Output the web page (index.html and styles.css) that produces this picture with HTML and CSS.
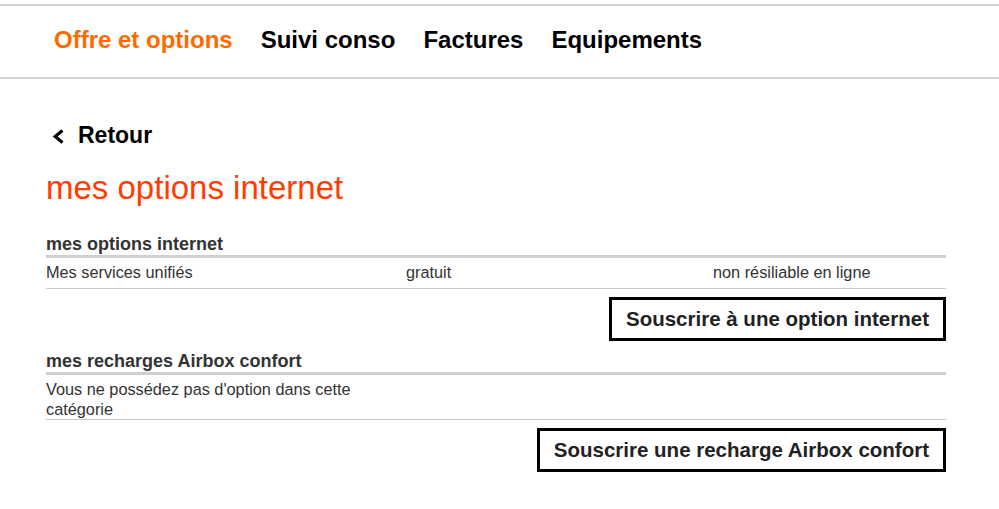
FILE: index.html
```html
<!DOCTYPE html>
<html lang="fr">
<head>
<meta charset="utf-8">
<title>mes options internet</title>
<link rel="stylesheet" href="styles.css">
</head>
<body>
<header class="topbar">
  <nav class="nav">
    <a class="nav__item nav__item--active" href="#">Offre et options</a>
    <a class="nav__item" href="#">Suivi conso</a>
    <a class="nav__item" href="#">Factures</a>
    <a class="nav__item" href="#">Equipements</a>
  </nav>
</header>
<main class="content">
  <a class="back" href="#">
    <svg class="back__icon" width="13" height="15" viewBox="0 0 13 15" aria-hidden="true">
      <polyline points="10.5,1.5 3.2,7.5 10.5,13.5" fill="none" stroke="#000" stroke-width="3.2"/>
    </svg>
    <span>Retour</span>
  </a>
  <h1 class="title">mes options internet</h1>

  <section class="section">
    <h2 class="section__head">mes options internet</h2>
    <div class="row row--tall">
      <div class="cell">Mes services unifiés</div>
      <div class="cell">gratuit</div>
      <div class="cell">non résiliable en ligne</div>
    </div>
    <div class="actions"><button class="btn">Souscrire à une option internet</button></div>
  </section>

  <section class="section">
    <h2 class="section__head">mes recharges Airbox confort</h2>
    <div class="row">
      <div class="cell">Vous ne possédez pas d'option dans cette catégorie</div>
    </div>
    <div class="actions"><button class="btn">Souscrire une recharge Airbox confort</button></div>
  </section>
</main>
</body>
</html>
```

FILE: styles.css
```css
* { box-sizing: border-box; }
html, body { margin: 0; padding: 0; background: #fff; }
body {
  font-family: "Liberation Sans", Arial, Helvetica, sans-serif;
  color: #000;
}
.topbar {
  margin-top: 4px;
  border-top: 2px solid #d2d2d2;
  border-bottom: 2px solid #d2d2d2;
  padding: 20px 0 23px 54px;
}
.nav {
  display: flex;
  gap: 28px;
  line-height: 28px;
}
.nav__item {
  font-size: 24px;
  font-weight: bold;
  color: #000;
  text-decoration: none;
}
.nav__item--active { color: #ff6a00; }

.content {
  width: 900px;
  margin-left: 46px;
  padding-top: 42px;
}
.back {
  display: flex;
  align-items: center;
  gap: 13px;
  margin-left: 6px;
  font-size: 23px;
  font-weight: bold;
  line-height: 28px;
  color: #000;
  text-decoration: none;
}
.back__icon { display: block; margin-top: 2px; }
.title {
  margin: 19px 0 0;
  font-size: 33px;
  font-weight: normal;
  line-height: 40px;
  color: #ff3d00;
}
.section { margin-top: 25px; }
.section + .section { margin-top: 9px; }
.section__head {
  margin: 0;
  font-size: 18px;
  font-weight: bold;
  line-height: 22px;
  color: #333;
  border-bottom: 3px solid #cfcfcf;
}
.row {
  display: grid;
  grid-template-columns: 360px 307px 1fr;
  padding: 4px 0 0;
  font-size: 16.3px;
  line-height: 20px;
  color: #333;
  border-bottom: 1px solid #c8c8c8;
}
.row--tall { padding-bottom: 6px; }
.cell { padding-right: 6px; }
.actions {
  display: flex;
  justify-content: flex-end;
  margin-top: 8px;
}
.btn {
  font-family: "Liberation Sans", Arial, Helvetica, sans-serif;
  font-size: 20.5px;
  font-weight: bold;
  line-height: 24px;
  color: #222;
  background: #fff;
  border: 3px solid #000;
  border-radius: 0;
  padding: 7px 14px;
  cursor: pointer;
}
```
